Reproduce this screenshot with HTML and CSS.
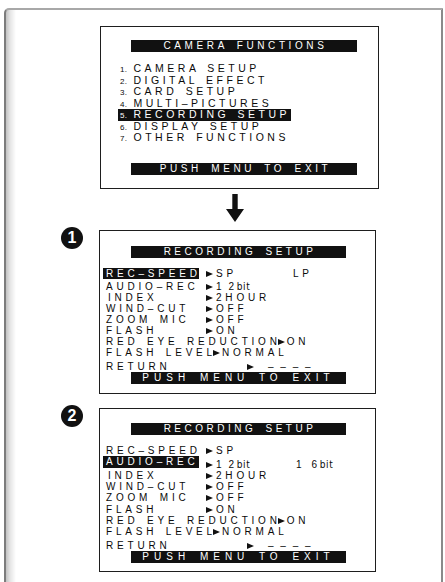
FILE: index.html
```html
<!DOCTYPE html>
<html>
<head>
<meta charset="utf-8">
<link rel="stylesheet" href="styles.css">
</head>
<body>
<div class="frame">
  <div class="screen menu">
    <div class="bar">CAMERA FUNCTIONS</div>
    <ul class="items">
      <li><span class="num">1.</span>CAMERA SETUP</li>
      <li><span class="num">2.</span>DIGITAL EFFECT</li>
      <li><span class="num">3.</span>CARD SETUP</li>
      <li><span class="num">4.</span>MULTI–PICTURES</li>
      <li><span class="sel"><span class="num">5.</span>RECORDING SETUP</span></li>
      <li><span class="num">6.</span>DISPLAY SETUP</li>
      <li><span class="num">7.</span>OTHER FUNCTIONS</li>
    </ul>
    <div class="bar foot">PUSH MENU TO EXIT</div>
  </div>

  <div class="arrow">
    <svg width="18" height="28" viewBox="0 0 18 28"><path d="M6.3 0H11.7V15H18L9 28L0 15H6.3Z" fill="#111"/></svg>
  </div>

  <div class="step">
    <div class="badge">1</div>
    <div class="screen setup s1">
      <div class="bar">RECORDING SETUP</div>
      <div class="rows">
        <div class="row h13"><span class="lbl"><span class="hl">REC–SPEED</span></span><span class="val"><i class="tri"></i>SP</span><span class="alt">LP</span></div>
        <div class="row"><span class="lbl">AUDIO–REC</span><span class="val"><i class="tri"></i><span class="dg">1</span>2<span class="bit">bit</span></span></div>
        <div class="row"><span class="lbl ind">INDEX</span><span class="val"><i class="tri"></i>2HOUR</span></div>
        <div class="row"><span class="lbl">WIND–CUT</span><span class="val"><i class="tri"></i>OFF</span></div>
        <div class="row"><span class="lbl">ZOOM MIC</span><span class="val"><i class="tri"></i>OFF</span></div>
        <div class="row"><span class="lbl">FLASH</span><span class="val"><i class="tri"></i>ON</span></div>
        <div class="line">RED EYE REDUCTION<i class="tri"></i>ON</div>
        <div class="line h14">FLASH LEVEL<i class="tri"></i>NORMAL</div>
        <div class="line ret"><span class="rlbl">RETURN</span><i class="tri wide"></i><span class="dash">– – – –</span></div>
      </div>
      <div class="bar foot wide">PUSH MENU TO EXIT</div>
    </div>
  </div>

  <div class="step two">
    <div class="badge">2</div>
    <div class="screen setup s2">
      <div class="bar">RECORDING SETUP</div>
      <div class="rows">
        <div class="row"><span class="lbl">REC–SPEED</span><span class="val"><i class="tri"></i>SP</span></div>
        <div class="row h14"><span class="lbl"><span class="hl tall">AUDIO–REC</span></span><span class="val low"><i class="tri"></i><span class="dg">1</span>2<span class="bit">bit</span></span><span class="alt low"><span class="dg far">1</span>6<span class="bit">bit</span></span></div>
        <div class="row"><span class="lbl ind">INDEX</span><span class="val"><i class="tri"></i>2HOUR</span></div>
        <div class="row"><span class="lbl">WIND–CUT</span><span class="val"><i class="tri"></i>OFF</span></div>
        <div class="row h12"><span class="lbl">ZOOM MIC</span><span class="val"><i class="tri"></i>OFF</span></div>
        <div class="row"><span class="lbl">FLASH</span><span class="val"><i class="tri"></i>ON</span></div>
        <div class="line">RED EYE REDUCTION<i class="tri"></i>ON</div>
        <div class="line h14">FLASH LEVEL<i class="tri"></i>NORMAL</div>
        <div class="line ret"><span class="rlbl">RETURN</span><i class="tri wide"></i><span class="dash">– – – –</span></div>
      </div>
      <div class="bar foot wide">PUSH MENU TO EXIT</div>
    </div>
  </div>
</div>
</body>
</html>
```

FILE: styles.css
```css
* { box-sizing: border-box; margin: 0; padding: 0; }

body {
  background: #fff;
  font-family: "Liberation Sans", Arial, sans-serif;
  color: #0a0a0a;
}

.frame {
  margin: 8px 2px 0 4px;
  min-height: 574px;
  border-top: 2px solid #a8a8a8;
  border-right: 2px solid #8a8a8a;
  border-left: 2px solid #7c7c7c;
  border-top-left-radius: 5px;
  background: linear-gradient(90deg, #c2c2c2 0, #e4e4e4 4px, #fff 10px);
  padding-top: 16px;
}

.screen {
  border: 1px solid #1e1e1e;
  background: #fff;
}

/* bars */
.bar {
  background: #111;
  color: #fff;
  height: 12px;
  line-height: 12px;
  font-size: 10px;
  letter-spacing: 3.6px;
  word-spacing: 3px;
  text-align: center;
  padding-left: 3px;
}

/* menu screen */
.menu {
  width: 279px;
  height: 163px;
  margin-left: 94px;
  padding-top: 13px;
}
.menu .bar {
  width: 226px;
  margin-left: 30px;
}
.menu .foot { margin-top: 19px; }

.items {
  list-style: none;
  margin-top: 11px;
  padding-left: 19px;
  font-size: 10.5px;
  line-height: 11.5px;
  letter-spacing: 3.5px;
  word-spacing: 2px;
  height: 81px;
}
.items li { height: 11.5px; white-space: nowrap; }
.num {
  font-size: 8px;
  letter-spacing: 0.4px;
  margin-right: 6px;
}
.sel {
  display: inline-block;
  background: #111;
  color: #fff;
  margin-left: -2px;
  padding: 0 1px 0 2px;
  height: 12px;
}

/* arrow */
.arrow {
  height: 41px;
  padding: 5px 0 0 220px;
}
.arrow svg { display: block; }

/* steps */
.step {
  display: flex;
  align-items: flex-start;
  padding-left: 55px;
}
.step.two { margin-top: 14px; }

.badge {
  width: 22px;
  height: 22px;
  border-radius: 50%;
  background: #111;
  color: #fff;
  font-weight: bold;
  font-size: 16px;
  line-height: 22px;
  text-align: center;
  margin: -3px 16px 0 0;
}

.setup {
  width: 277px;
  height: 164px;
  padding-top: 15px;
}
.setup.s2 { padding-top: 14px; }
.setup .bar {
  width: 215px;
  margin-left: 31px;
  letter-spacing: 3.5px;
}
.setup .bar.wide {
  letter-spacing: 5px;
  word-spacing: 2px;
  padding-left: 0;
}

.rows {
  margin-top: 10px;
  padding-left: 6px;
  font-size: 10px;
  letter-spacing: 3.8px;
  word-spacing: 2px;
  line-height: 11px;
}

.row {
  display: grid;
  grid-template-columns: 100px 87px auto;
  height: 11px;
}
.line { height: 11px; white-space: nowrap; }

.h12 { height: 12px; }
.h13 { height: 13px; }
.h14 { height: 14px; }

.lbl { white-space: nowrap; }
.lbl.ind { padding-left: 2px; }

.hl {
  display: inline-block;
  background: #111;
  color: #fff;
  margin-left: -3px;
  padding: 0 0 0 3px;
  width: 96px;
  height: 11px;
}
.hl.tall { height: 12px; line-height: 12px; }

.val, .alt { white-space: nowrap; }
.low { padding-top: 3px; }

.tri {
  display: inline-block;
  width: 0;
  height: 0;
  border-left: 7px solid #111;
  border-top: 3.5px solid transparent;
  border-bottom: 3.5px solid transparent;
  margin: 0 3px 0 0;
  vertical-align: 0;
}
.line .tri { margin-left: -3px; margin-right: 2px; }
.line .tri.wide { margin-right: 14px; margin-left: 0; }

.rlbl {
  display: inline-block;
  width: 141px;
}

.dg { margin-right: 3px; }
.dg.far { margin-right: 6px; margin-left: 3px; }
.bit {
  font-family: "DejaVu Sans", "Liberation Sans", sans-serif;
  font-stretch: condensed;
  font-size: 10px;
  letter-spacing: 0.6px;
  margin-left: -1px;
}

.dash { letter-spacing: 1px; }
```
